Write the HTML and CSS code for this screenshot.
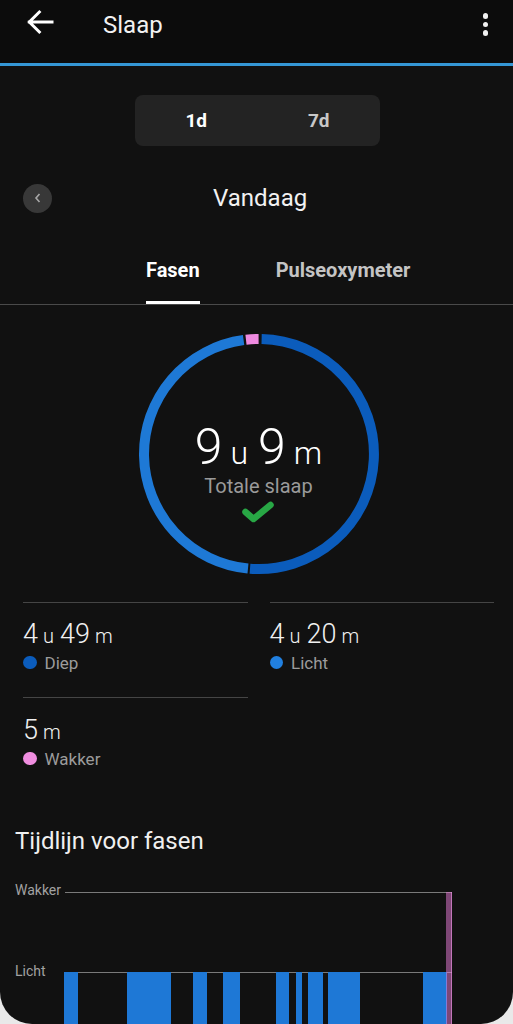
FILE: index.html
```html
<!DOCTYPE html>
<html lang="nl">
<head>
<meta charset="utf-8">
<title>Slaap</title>
<link rel="stylesheet" href="styles.css">
</head>
<body>
<div class="screen">
  <header class="topbar">
    <svg class="back" width="32" height="32" viewBox="0 0 24 24" aria-hidden="true">
      <path d="M21 12H4 M11.5 4.5L4 12l7.5 7.5" fill="none" stroke="#fff" stroke-width="2.25" stroke-linecap="square"/>
    </svg>
    <h1 class="title">Slaap</h1>
    <div class="more"><span></span><span></span><span></span></div>
  </header>
  <div class="accent"></div>

  <div class="segmented">
    <div class="seg active">1d</div>
    <div class="seg">7d</div>
  </div>

  <div class="daterow">
    <div class="prev">
      <svg width="10" height="12" viewBox="0 0 10 12" aria-hidden="true"><path d="M6.5 2L3 6l3.5 4" fill="none" stroke="#a8a8a8" stroke-width="1.6"/></svg>
    </div>
    <div class="date">Vandaag</div>
  </div>

  <nav class="tabs">
    <div class="tab active">Fasen</div>
    <div class="tab">Pulseoxymeter</div>
  </nav>

  <section class="ringwrap">
    <svg class="ring" width="250" height="250" viewBox="0 0 250 250" aria-hidden="true">
      <path d="M127.61 10.03 A115 115 0 1 1 115.98 239.65" fill="none" stroke="#0b5cbc" stroke-width="10"/>
      <path d="M113.98 239.47 A115 115 0 0 1 109.59 11.04" fill="none" stroke="#1e79d6" stroke-width="10"/>
      <path d="M111.98 10.74 A115 115 0 0 1 124.6 10" fill="none" stroke="#ef8ae0" stroke-width="10"/>
    </svg>
    <div class="ringtext">
      <div class="total"><span class="big">9</span><span class="unit">u</span><span class="big">9</span><span class="unit">m</span></div>
      <div class="totlabel">Totale slaap</div>
      <svg class="check" width="34" height="22" viewBox="0 0 34 22" aria-hidden="true">
        <path d="M4.5 11L12.5 18L29.5 4" fill="none" stroke="#28a745" stroke-width="6.5" stroke-linecap="round" stroke-linejoin="round"/>
      </svg>
    </div>
  </section>

  <section class="stats">
    <div class="stat">
      <div class="val"><span class="num">4</span><span class="u">u</span><span class="num">49</span><span class="u">m</span></div>
      <div class="lbl"><i class="dot deep"></i>Diep</div>
    </div>
    <div class="stat">
      <div class="val"><span class="num">4</span><span class="u">u</span><span class="num">20</span><span class="u">m</span></div>
      <div class="lbl"><i class="dot light"></i>Licht</div>
    </div>
    <div class="stat">
      <div class="val"><span class="num">5</span><span class="u">m</span></div>
      <div class="lbl"><i class="dot awake"></i>Wakker</div>
    </div>
  </section>

  <h2 class="sectitle">Tijdlijn voor fasen</h2>

  <section class="chart">
    <div class="ylabels">
      <div class="yl">Wakker</div>
      <div class="yl licht">Licht</div>
    </div>
    <svg class="plot" width="400" height="150" viewBox="0 0 400 150" aria-hidden="true">
      <line x1="1" y1="10.5" x2="388" y2="10.5" stroke="#7a7a7a" stroke-width="1"/>
      <line x1="0" y1="90.5" x2="388" y2="90.5" stroke="#7a7a7a" stroke-width="1"/>
      <g fill="#1e78d6">
        <rect x="0" y="90" width="14" height="60"/>
        <rect x="63" y="90" width="44" height="60"/>
        <rect x="129" y="90" width="14" height="60"/>
        <rect x="159" y="90" width="17" height="60"/>
        <rect x="212" y="90" width="13" height="60"/>
        <rect x="232" y="90" width="6" height="60"/>
        <rect x="244" y="90" width="15" height="60"/>
        <rect x="264" y="90" width="32" height="60"/>
        <rect x="359" y="90" width="24" height="60"/>
      </g>
      <rect x="382" y="10" width="6" height="140" fill="rgba(235,125,220,0.5)"/>
      <line x1="387.5" y1="10" x2="387.5" y2="150" stroke="rgba(240,150,230,0.6)" stroke-width="1"/>
    </svg>
  </section>
</div>
</body>
</html>
```

FILE: styles.css
```css
* { box-sizing: border-box; margin: 0; padding: 0; }
html, body { background: #e9e9e9; }
body { margin: 0; font-family: Roboto, "Noto Sans", sans-serif; color: #fff; }

.screen {
  width: 513px;
  height: 1024px;
  background: #111111;
  border-radius: 0 0 32px 32px;
  overflow: hidden;
}

.topbar {
  height: 63px;
  background: #0c0c0c;
  display: flex;
  align-items: flex-start;
  padding: 6px 25px 0 24px;
}
.back { display: block; }
.title {
  margin-left: 47px;
  margin-top: 2px;
  font-size: 24px;
  font-weight: 400;
  line-height: 34px;
  color: #f2f2f2;
}
.more {
  margin-left: auto;
  display: flex;
  flex-direction: column;
  gap: 3px;
  padding-top: 7px;
}
.more span {
  width: 5.5px; height: 5.5px; border-radius: 50%; background: #f2f2f2;
}
.accent { height: 3px; background: #3597d6; }

.segmented {
  margin: 29px 0 0 135px;
  width: 245px;
  height: 51px;
  border-radius: 8px;
  background: #232323;
  display: flex;
}
.seg {
  flex: 1;
  display: flex;
  align-items: center;
  justify-content: center;
  font-size: 19px;
  font-weight: 700;
  color: #c8c8c8;
}
.seg.active { color: #fff; }

.daterow {
  margin-top: 37px;
  height: 30px;
  display: flex;
  align-items: center;
  padding-left: 23px;
}
.prev {
  width: 29px; height: 29px; border-radius: 50%;
  background: #383838;
  display: flex; align-items: center; justify-content: center;
}
.date {
  margin-left: 161px;
  font-size: 24px;
  color: #f2f2f2;
}

.tabs {
  margin-top: 37px;
  display: flex;
  padding-left: 146px;
  gap: 76px;
  border-bottom: 1px solid #4a4a4a;
}
.tab {
  padding-top: 8px;
  height: 54px;
  line-height: 24px;
  font-size: 20px;
  font-weight: 700;
  color: #c4c4c4;
  border-bottom: 3px solid transparent;
}
.tab.active { color: #fff; border-bottom-color: #fff; }

.ringwrap {
  margin: 24px auto 0;
  width: 250px;
  height: 250px;
  display: grid;
  position: relative;
  left: 2px;
}
.ring, .ringtext { grid-area: 1 / 1; }
.ringtext {
  display: flex;
  flex-direction: column;
  align-items: center;
  padding-top: 93px;
}
.total { height: 50px; line-height: 50px; white-space: nowrap; }
.total .big { font-size: 50px; font-weight: 300; }
.total .unit { font-size: 32px; font-weight: 300; margin: 0 10px 0 8px; }
.total .unit:last-child { margin-right: 0; }
.totlabel {
  margin-top: 2px;
  font-size: 20px;
  line-height: 24px;
  color: #9a9a9a;
}
.check { margin-top: 3px; margin-left: -2px; }

.stats {
  margin-top: 23px;
  padding: 0 19px 0 23px;
  display: grid;
  grid-template-columns: 1fr 1fr;
  column-gap: 22px;
}
.stat {
  border-top: 1.5px solid #454545;
  padding: 15.5px 0 23px;
}
.stat:nth-child(3) { padding-top: 17px; }
.val { height: 30px; line-height: 30px; white-space: nowrap; color: #f0f0f0; }
.val .num { font-size: 27px; font-weight: 300; }
.val .u { font-size: 20px; font-weight: 300; margin: 0 6px 0 5px; }
.val .u:last-child { margin-right: 0; }
.lbl {
  margin-top: 3px;
  height: 22px;
  line-height: 22px;
  font-size: 17px;
  color: #9c9c9c;
  display: flex;
  align-items: center;
  gap: 8px;
}
.dot { display: block; width: 13.5px; height: 13.5px; border-radius: 50%; }
.dot.deep { background: #0b5cbc; }
.dot.light { background: #2180e0; }
.dot.awake { background: #f08ee0; }

.sectitle {
  margin-top: 33px;
  padding-left: 15px;
  font-size: 24px;
  font-weight: 400;
  line-height: 30px;
  color: #f0f0f0;
}

.chart {
  margin-top: 26px;
  display: flex;
  padding-left: 15px;
}
.ylabels { width: 49px; }
.yl {
  font-size: 14px;
  line-height: 16px;
  color: #a2a2a2;
}
.yl.licht { margin-top: 65px; }
.plot { display: block; }
```
